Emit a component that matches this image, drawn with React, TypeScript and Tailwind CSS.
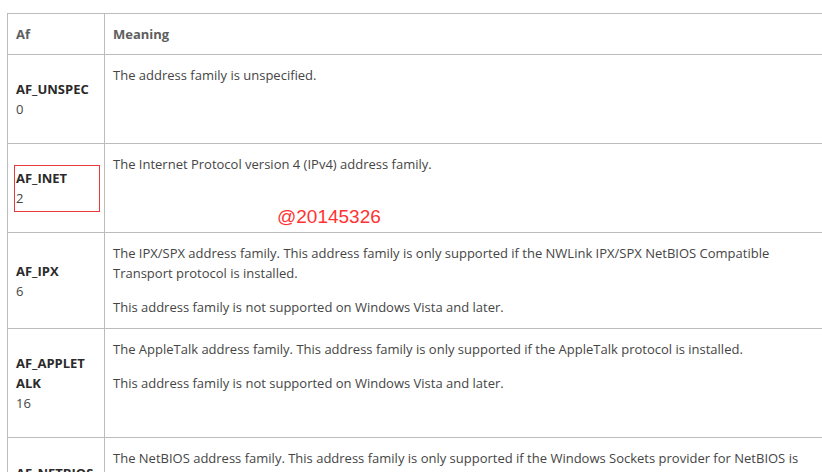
import { FC, ReactNode } from 'react';

type Row = {
	name: string;
	value: string;
	height: string;
	paragraphs: string[];
};

// \u200B marks where the narrow first column wraps a long constant name
const rows: Row[] = [
	{
		name: 'AF_UNSPEC',
		value: '0',
		height: 'h-[89px]',
		paragraphs: ['The address family is unspecified.'],
	},
	{
		name: 'AF_INET',
		value: '2',
		height: 'h-[89px]',
		paragraphs: ['The Internet Protocol version 4 (IPv4) address family.'],
	},
	{
		name: 'AF_IPX',
		value: '6',
		height: 'h-[96px]',
		paragraphs: [
			'The IPX/SPX address family. This address family is only supported if the NWLink IPX/SPX NetBIOS Compatible Transport protocol is installed.',
			'This address family is not supported on Windows Vista and later.',
		],
	},
	{
		name: 'AF_APPLET\u200BALK',
		value: '16',
		height: 'h-[109px]',
		paragraphs: [
			'The AppleTalk address family. This address family is only supported if the AppleTalk protocol is installed.',
			'This address family is not supported on Windows Vista and later.',
		],
	},
	{
		name: 'AF_NETBIO\u200BS',
		value: '17',
		height: 'h-[90px]',
		paragraphs: [
			'The NetBIOS address family. This address family is only supported if the Windows Sockets provider for NetBIOS is installed.',
		],
	},
];

const Cell: FC<{ children: ReactNode; className?: string }> = ({
	children,
	className = '',
}) => (
	<td className={`border border-[#bcbcbc] px-2 ${className}`}>{children}</td>
);

export default function App() {
	return (
		<div
			className="relative w-[822px] h-[472px] overflow-hidden bg-white pt-[13px] pl-[7px] text-[13px] leading-5 text-[#454545]"
			style={{ fontFamily: '"Open Sans", "Noto Sans", sans-serif' }}
		>
			<table className="w-[826px] border-collapse table-fixed">
				<colgroup>
					<col className="w-[97px]" />
					<col />
				</colgroup>
				<thead>
					<tr className="h-[41px]">
						<th className="border border-[#bcbcbc] px-2 text-left align-middle font-bold text-[#5e5e5e]">
							Af
						</th>
						<th className="border border-[#bcbcbc] px-2 text-left align-middle font-bold text-[#5e5e5e]">
							Meaning
						</th>
					</tr>
				</thead>
				<tbody>
					{rows.map((row) => (
						<tr key={row.name} className={row.height}>
							<Cell className="align-middle">
								<div className="font-bold text-[#2a2a2a]">{row.name}</div>
								<div>{row.value}</div>
							</Cell>
							<Cell className="align-top pt-[10px]">
								<div className="flex flex-col gap-[14px]">
									{row.paragraphs.map((p) => (
										<p key={p}>{p}</p>
									))}
								</div>
							</Cell>
						</tr>
					))}
				</tbody>
			</table>

			{/* annotation drawn over the screenshot */}
			<div className="absolute left-[14px] top-[165px] w-[86px] h-[47px] border border-[#e83a3a]" />
			<div
				className="absolute left-[277px] top-[205px] text-[19px] leading-6 text-[#ff3333]"
				style={{ fontFamily: '"Liberation Sans", Arial, sans-serif' }}
			>
				@20145326
			</div>
		</div>
	);
}
